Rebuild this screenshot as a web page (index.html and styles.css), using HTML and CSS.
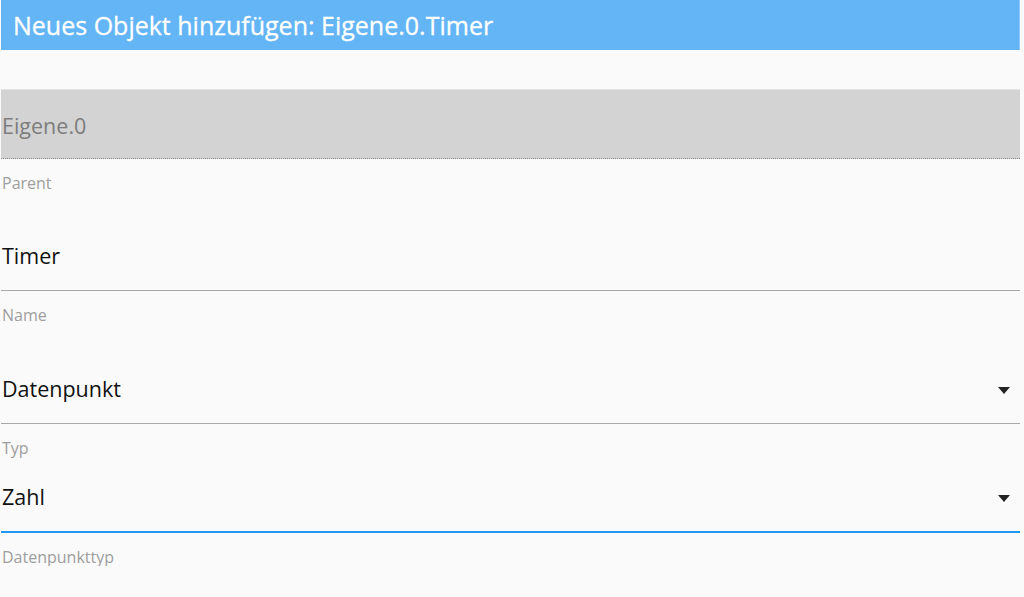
FILE: index.html
```html
<!DOCTYPE html>
<html lang="de">
<head>
<meta charset="utf-8">
<title>Neues Objekt hinzufügen</title>
<link rel="stylesheet" href="styles.css">
</head>
<body>
<div class="dialog">
  <div class="title">Neues Objekt hinzufügen: Eigene.0.Timer</div>
  <div class="form">
    <div class="group group-parent">
      <div class="input disabled">Eigene.0</div>
      <div class="helper">Parent</div>
    </div>
    <div class="group group-name">
      <div class="input">Timer</div>
      <div class="helper">Name</div>
    </div>
    <div class="group group-type">
      <div class="input select">Datenpunkt<span class="arrow"></span></div>
      <div class="helper">Typ</div>
    </div>
    <div class="group group-dptype">
      <div class="input select focused">Zahl<span class="arrow"></span></div>
      <div class="helper">Datenpunkttyp</div>
    </div>
  </div>
</div>
</body>
</html>
```
FILE: styles.css
```css
html, body {
  margin: 0;
  padding: 0;
  background: #fafafa;
  font-family: "Open Sans", "Noto Sans", sans-serif;
}
.dialog {
  margin: 0 4px 0 1px;
}
.title {
  height: 50px;
  line-height: 50px;
  background: #64b5f6;
  color: #fff;
  font-size: 25px;
  padding-left: 12px;
  border-right: 1px solid #8ec8f8;
  box-sizing: border-box;
  white-space: nowrap;
  -webkit-text-stroke: 0.3px #fff;
}
.form {
  display: flex;
  flex-direction: column;
}
.group-parent { margin-top: 39px; }
.group-name { margin-top: 49px; }
.group-type { margin-top: 50px; }
.group-dptype { margin-top: 25px; }
.input {
  position: relative;
  font-size: 21.5px;
  line-height: 30px;
  padding: 0 0 19px 1px;
  color: #111;
  border-bottom: 1px solid #a8a8a8;
}
.input.disabled {
  background: #d3d3d3;
  color: #7d7d7d;
  padding-top: 21px;
  padding-bottom: 0;
  box-sizing: border-box;
  height: 70px;
  border-bottom: 1px dotted #888;
  border-top: 1px solid #e4e4e4;
}
.input.focused {
  border-bottom: 2px solid #2196f3;
}
.arrow {
  position: absolute;
  right: 10px;
  top: 13px;
  width: 0;
  height: 0;
  border-left: 6.5px solid transparent;
  border-right: 6.5px solid transparent;
  border-top: 7px solid #222;
}
.helper {
  margin-top: 15px;
  font-size: 16px;
  line-height: 18px;
  color: #9e9e9e;
  padding-left: 1px;
}
```
